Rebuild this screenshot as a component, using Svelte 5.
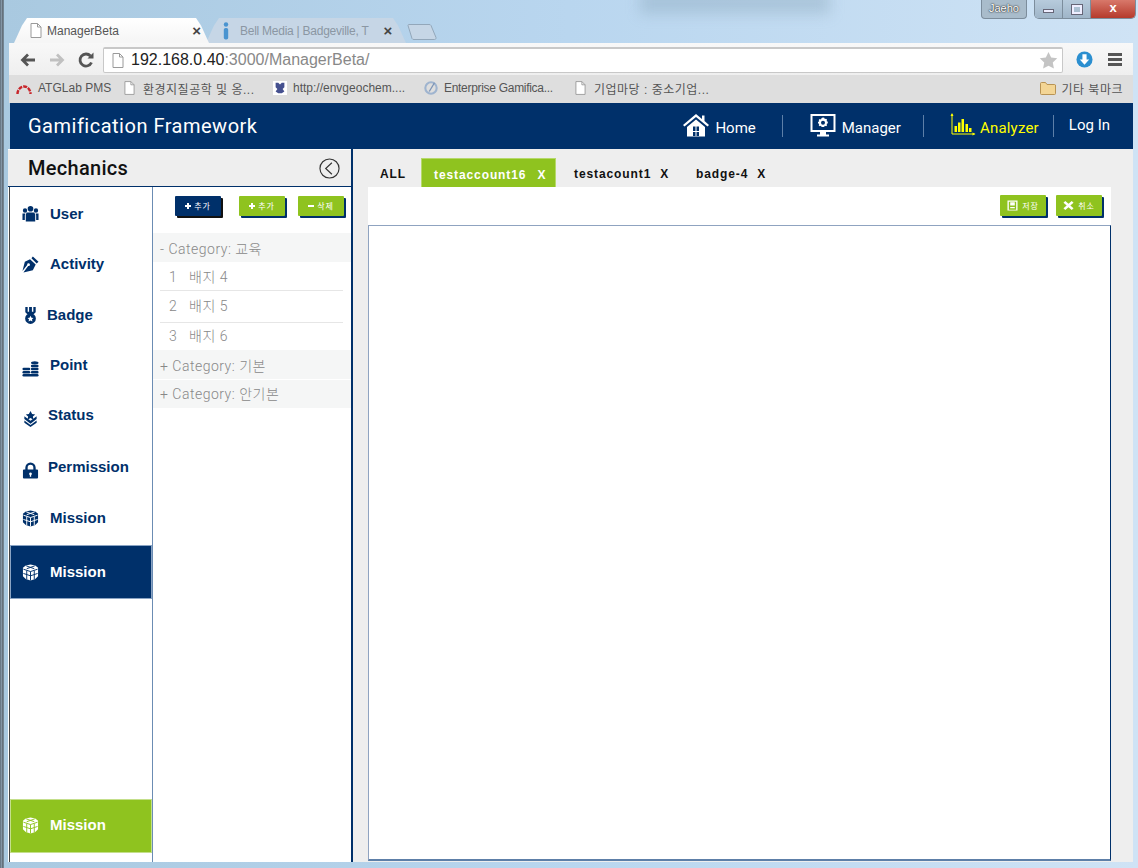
<script lang="ts">
  const NAV = [
    { id: 'user', label: 'User', left: 11, shift: 0, nudge: 0 },
    { id: 'activity', label: 'Activity', left: 11, shift: -1, nudge: 0 },
    { id: 'badge', label: 'Badge', left: 8, shift: -1, nudge: 0 },
    { id: 'point', label: 'Point', left: 11, shift: -2, nudge: 2 },
    { id: 'status', label: 'Status', left: 9, shift: -3, nudge: 1 },
    { id: 'permission', label: 'Permission', left: 9, shift: -2, nudge: 2 },
    { id: 'mission', label: 'Mission', left: 11, shift: -2, nudge: -1 },
  ];
  const BADGES = [
    { no: 1, name: '배지 4', cls: 'r1' },
    { no: 2, name: '배지 5', cls: 'r2' },
    { no: 3, name: '배지 6', cls: 'r3' },
  ];
</script>

{#snippet cube()}
  <svg class="ico" viewBox="0 0 18 18">
    <path fill="currentColor" d="M9 0.500 L14 1.500 L17 4 V13 L14 16 L9 17.500 L4 16 L1 13 V4 L4 1.500Z"/>
    <path fill="none" stroke="var(--cut)" stroke-width="1" d="M1.500 5.500 L9 8 L16.500 5.500 M9 8 V17.500 M1.500 10 L9 12.500 L16.500 10 M5 7 V16 M13 7 V16 M4.500 2 L13 5 M13.500 2 L5 5"/>
  </svg>
{/snippet}

{#snippet navIcon(id)}
  {#if id === 'user'}
    <svg class="ico" viewBox="0 0 18 18"><path fill="currentColor" d="M9 1a3 3 0 1 1 0 6a3 3 0 1 1 0-6ZM3.200 3.500a2.300 2.300 0 1 1 0 4.600a2.300 2.300 0 1 1 0-4.600ZM14.800 3.500a2.300 2.300 0 1 1 0 4.600a2.300 2.300 0 1 1 0-4.600ZM5 8h8l1 2v7.500H4V10ZM0.500 9h3L3 11v5H0.500ZM14.500 9h3v7H15v-5Z"/></svg>
  {:else if id === 'activity'}
    <svg class="ico" viewBox="0 0 18 18"><path fill="currentColor" d="M11.500 0.500 L17.500 6 L15.500 8 L10 2.500ZM8.500 3.500 L14.500 9 L11.500 15 L1.500 17.500 L6.500 10.500 A1.500 1.500 0 1 0 5.500 9.500 L0.500 16 L3 6Z"/></svg>
  {:else if id === 'badge'}
    <svg class="ico" viewBox="0 0 18 18"><path fill="currentColor" d="M3.500 0h2.500v5h1.500V0h3v5H12V0h2.500v5.500L12 8H6L3.500 5.500Z"/><path fill="currentColor" fill-rule="evenodd" d="M9 6.500a5.700 5.700 0 1 1 0 11.400a5.700 5.700 0 1 1 0-11.400ZM9 9.300l1 2 2.200 0.300-1.600 1.500 0.400 2.200L9 14.200l-2 1.100 0.400-2.200-1.600-1.500 2.200-0.300Z"/></svg>
  {:else if id === 'point'}
    <svg class="ico" viewBox="0 0 18 18"><g fill="currentColor"><ellipse cx="13.500" cy="3" rx="4" ry="1.800"/><rect x="9.500" y="5" width="8" height="2.600" rx="1"/><rect x="9.500" y="8.300" width="8" height="2.600" rx="1"/><rect x="9.500" y="11.600" width="8" height="2.600" rx="1"/><rect x="0.500" y="8.300" width="8.300" height="2.600" rx="1.300"/><rect x="0.500" y="11.600" width="8.300" height="2.600" rx="1.300"/><rect x="0.500" y="14.800" width="17" height="2.600" rx="1.300"/></g></svg>
  {:else if id === 'status'}
    <svg class="ico" viewBox="0 0 18 18"><path fill="currentColor" d="M9 1l1.700 3.300 3.300 0.400-2.500 2.300 0.700 3.300L9 8.600l-3.200 1.700 0.700-3.300L4 4.700l3.300-0.400ZM2.500 6.500 L9 11.500 L15.500 6.500 V9.500 L9 14.500 L2.500 9.500ZM2.500 11 L9 16 L15.500 11 V13.500 L9 18 L2.500 13.500Z"/></svg>
  {:else if id === 'permission'}
    <svg class="ico" viewBox="0 0 18 18"><path fill="currentColor" fill-rule="evenodd" d="M9 0.500a5.500 5.500 0 0 1 5.500 5.500v2H16a1 1 0 0 1 1 1v7.500a1 1 0 0 1-1 1H2a1 1 0 0 1-1-1V9a1 1 0 0 1 1-1h1.500V6A5.500 5.500 0 0 1 9 0.500ZM9 3a3 3 0 0 0-3 3v2h6V6a3 3 0 0 0-3-3ZM9 11a1.500 1.500 0 0 0-0.700 2.800V15.500h1.400V13.800A1.500 1.500 0 0 0 9 11Z"/></svg>
  {:else}
    {@render cube()}
  {/if}
{/snippet}

{#snippet docIcon()}
  <svg class="doc" viewBox="0 0 12 15"><path fill="#fff" stroke="#9a9a9a" d="M1 0.500h6.500L11 4v10.500H1Z"/><path fill="none" stroke="#9a9a9a" d="M7.500 0.500V4H11"/></svg>
{/snippet}

<div class="glass">
  <div class="smudge"></div>
  <div class="titlebar">
    <span class="profile">Jaeho</span>
    <div class="controls">
      <span class="ctl"><i class="min"></i></span>
      <span class="ctl"><i class="max"></i></span>
      <span class="ctl close">x</span>
    </div>
  </div>

  <div class="tabstrip">
    <div class="ctab active">
      {@render docIcon()}
      <span class="ctab-title">ManagerBeta</span>
      <span class="ctab-x">×</span>
    </div>
    <div class="ctab second">
      <svg class="info" viewBox="0 0 8 18"><circle cx="4" cy="2.500" r="2.200" fill="#4a94d0"/><rect x="1.800" y="6" width="4.400" height="11.500" rx="1.800" fill="#4a94d0"/></svg>
      <span class="ctab-title">Bell Media | Badgeville, T</span>
      <span class="ctab-x">×</span>
    </div>
    <svg class="newtab" viewBox="0 0 30 16"><path fill="#c6d6e6" stroke="#93a7ba" d="M1 1.500a1 1 0 0 1 1-1h20a2 2 0 0 1 2 1l5 12a1.500 1.500 0 0 1-1.500 2H7a2 2 0 0 1-2-1Z"/></svg>
  </div>

  <div class="sheet">
    <div class="toolbar">
      <svg class="tool" viewBox="0 0 18 18"><path fill="none" stroke="#555" stroke-width="2.800" d="M16 9H4M9 3.500L3.500 9L9 14.500"/></svg>
      <svg class="tool" viewBox="0 0 18 18"><path fill="none" stroke="#c0c0c0" stroke-width="2.800" d="M2 9H14M9 3.500L14.500 9L9 14.500"/></svg>
      <svg class="tool last-tool" viewBox="0 0 18 18"><path fill="none" stroke="#555" stroke-width="2.800" d="M14.500 11.500A6 6 0 1 1 13.500 5"/><path fill="#555" d="M10.500 7.500h6v-6Z"/></svg>
      <div class="omnibox">
        {@render docIcon()}
        <span class="url"><b>192.168.0.40</b>:3000/ManagerBeta/</span>
        <svg class="star" viewBox="0 0 20 20"><path fill="#c4c4c4" d="M10 1l2.800 5.900 6.400 0.800-4.700 4.400 1.200 6.400L10 15.400l-5.700 3.100 1.200-6.400L0.800 7.700l6.400-0.800Z"/></svg>
      </div>
      <svg class="dl" viewBox="0 0 18 18"><circle cx="9" cy="9" r="8.500" fill="#2b8fd0"/><path fill="#fff" d="M6.800 3.500h4.400V9H14l-5 5.500L4 9h2.800Z"/></svg>
      <div class="burger"><i></i><i></i><i></i></div>
    </div>

    <div class="bookmarks">
      <span class="bm first"><svg class="bm-ico" viewBox="0 0 16 14"><path fill="none" stroke="#c8262b" stroke-width="2.400" stroke-dasharray="4 1" d="M1.500 13A6.500 7.500 0 0 1 14.500 13"/></svg>ATGLab PMS</span>
      <span class="bm w148 ko">{@render docIcon()}환경지질공학 및 옹...</span>
      <span class="bm w151"><svg class="bm-ico" viewBox="0 0 16 16"><rect width="16" height="16" fill="#fff"/><path fill="#45508f" d="M3 2h3l2 2 2-2h3v5l-2 2 2 3-3 2H6l-3-2 2-3-2-2Z"/></svg>http://envgeochem....</span>
      <span class="bm w152 tight"><svg class="bm-ico" viewBox="0 0 16 16"><circle cx="8" cy="8" r="6.500" fill="none" stroke="#9fb4cf" stroke-width="2.400"/><path stroke="#7c93b5" stroke-width="1.500" d="M12 2L6 12"/></svg>Enterprise Gamifica...</span>
      <span class="bm ko">{@render docIcon()}기업마당 : 중소기업...</span>
      <span class="bm last ko"><svg class="bm-ico" viewBox="0 0 16 14"><path fill="#f3d595" stroke="#b89354" d="M0.500 2.500a1 1 0 0 1 1-1h4l1.500 2h7.500a1 1 0 0 1 1 0.500v8.500a1 1 0 0 1-1 1h-13a1 1 0 0 1-1-1Z"/></svg>기타 북마크</span>
    </div>

    <header class="appbar">
      <h1>Gamification Framework</h1>
      <nav class="topnav">
        <a class="home">
          <svg class="top-ico" viewBox="0 0 26 24"><path fill="#fff" d="M13 1 L19 6 V2.500 H21.500 V8 L26 12 L24.500 13.500 L13 4 L1.500 13.500 L0 12ZM4 14 L13 6.500 L22 14 V23.500 H4ZM10 13.500 V18 H12.500 V13.500ZM13.500 13.500 V18 H16 V13.500ZM10 19 V23 H12.500 V19ZM13.500 19 V23 H16 V19Z" fill-rule="evenodd"/></svg>
          Home
        </a>
        <span class="sep s1"></span>
        <a class="manager">
          <svg class="top-ico" viewBox="0 0 26 24"><path fill="#fff" fill-rule="evenodd" d="M0.500 1h25v18H16v2.500h3V23.500H7V21.500h3V19H0.500ZM2.500 3V17h21V3Z"/><path fill="#fff" d="M13 4.500l1.300 0.300 0.500 1.300 1.300-0.400 1 1-0.500 1.300 1.200 0.700v1.500l-1.200 0.700 0.500 1.300-1 1-1.300-0.500-0.700 1.200H11.600l-0.600-1.200-1.300 0.500-1-1 0.500-1.300-1.200-0.700V9l1.200-0.700-0.500-1.300 1-1 1.300 0.400 0.600-1.300ZM13 7.800a2 2 0 1 0 0 4a2 2 0 1 0 0-4Z" fill-rule="evenodd"/></svg>
          Manager
        </a>
        <span class="sep s2"></span>
        <a class="analyzer">
          <svg class="top-ico" viewBox="0 0 25 24"><path fill="none" stroke="#ff0" stroke-width="1" d="M1.500 1V21H24"/><path fill="#ff0" d="M1.500 0L0 3h3ZM25 21l-3-1.500v3ZM4 13h2.500v6H4ZM7.500 9.500H10V19H7.500ZM11 6h2.500v13H11ZM15 11h2.500v8H15ZM18.500 15H21v4h-2.500Z"/></svg>
          Analyzer
        </a>
        <span class="sep s3"></span>
        <a class="login">Log In</a>
      </nav>
    </header>

    <div class="body">
      <aside class="side">
        <div class="side-head">
          <h2>Mechanics</h2>
          <svg class="collapse" viewBox="0 0 22 22"><circle cx="11" cy="11" r="10" fill="none" stroke="#333" stroke-width="1.200"/><path fill="none" stroke="#333" stroke-width="1.200" d="M13.500 5L7 11l6.500 6"/></svg>
        </div>
        <div class="side-cols">
          <ul class="mech">
            {#each NAV as item}
              <li class="mech-item" style="--t:{item.left}px;--dy:{item.shift}px;--iy:{item.nudge}px">
                {@render navIcon(item.id)}
                <span>{item.label}</span>
              </li>
            {/each}
            <li class="mech-item selected" style="--t:11px;--dy:-1px;--iy:0px">{@render cube()}<span>Mission</span></li>
            <li class="mech-item green" style="--t:11px;--dy:-2px;--iy:-1px">{@render cube()}<span>Mission</span></li>
          </ul>

          <div class="list">
            <div class="list-btns">
              <button class="btn navy"><i class="plus"></i>추가</button>
              <button class="btn lime gap1"><i class="plus"></i>추가</button>
              <button class="btn lime gap2"><i class="minus"></i>삭제</button>
            </div>
            <div class="cat">- Category: 교육</div>
            {#each BADGES as b}
              <div class="badge-row {b.cls}"><span class="no">{b.no}</span>{b.name}</div>
            {/each}
            <div class="cat">+ Category: 기본</div>
            <div class="cat next">+ Category: 안기본</div>
          </div>
        </div>
      </aside>

      <main class="content">
        <div class="tabs">
          <span class="tab all">ALL</span>
          <span class="tab on">testaccount16<em>X</em></span>
          <span class="tab t2">testacount1<em>X</em></span>
          <span class="tab t3">badge-4<em>X</em></span>
        </div>
        <div class="panel">
          <div class="panel-bar">
            <button class="btn lime act">
              <svg viewBox="0 0 12 12"><path fill="#fff" fill-rule="evenodd" d="M0.500 0.500h11v11h-11ZM2 2v8.500h8V2ZM3.500 2.500h5V6h-5ZM3.500 7.500h5V9h-5Z"/></svg>저장
            </button>
            <button class="btn lime act">
              <svg viewBox="0 0 12 12"><path fill="#fff" d="M2.500 1L6 4.200 9.500 1 11.500 3 8 6l3.500 3-2 2L6 7.800 2.500 11 0.500 9 4 6 0.500 3Z"/></svg>취소
            </button>
          </div>
          <div class="canvas"></div>
        </div>
      </main>
    </div>
  </div>
</div>

<style>
  :global(body) { margin: 0; background: #a8cbe8; }
  * { box-sizing: border-box; }
  .glass {
    width: 1138px; height: 868px; overflow: hidden; position: relative;
    padding: 0 5px 6px 9px;
    background: linear-gradient(90deg, #5d6b78 0, #8fa3b3 2px, #3b3f44 3px, #a9c9e0 4px, #b9d6ef 50%, #cfe3f5 100%);
    font-family: "Liberation Sans", "Noto Sans CJK KR", sans-serif;
  }
  .smudge {
    position: absolute; left: 640px; top: -10px; width: 190px; height: 24px;
    background: rgba(120, 150, 170, .3); filter: blur(7px);
  }
  .titlebar { height: 18px; display: flex; justify-content: flex-end; align-items: flex-start; margin-right: -3px; position: relative; }
  .profile {
    width: 46px; height: 19px; margin-right: 7px; border: 1px solid #7c8d9c; border-top: 0;
    border-radius: 0 0 4px 4px; background: #a9bccb; color: #fff;
    font-size: 11px; line-height: 17px; text-align: center; text-shadow: 0 0 2px #222, 0 0 1px #222;
  }
  .controls { display: flex; height: 19px; border: 1px solid #7c8d9c; border-top: 0; border-radius: 0 0 5px 5px; overflow: hidden; }
  .ctl { width: 28px; display: flex; align-items: center; justify-content: center; background: linear-gradient(#b7cbdc, #9fb5c8); border-right: 1px solid #7c8d9c; }
  .ctl.close { width: 44px; border: 0; background: linear-gradient(#d8786a, #b53a2c); color: #fff; font: bold 13px/1 "Liberation Sans", sans-serif; padding-bottom: 4px; }
  .min { width: 11px; height: 4px; background: #eef; border: 1px solid #667; margin-top: 4px; }
  .max { width: 10px; height: 9px; border: 2px solid #eef; outline: 1px solid #667; }

  .tabstrip { height: 25px; display: flex; align-items: flex-end; padding-left: 5px; position: relative; }
  .ctab {
    width: 195px; height: 25px; margin-right: -3px; padding: 0 8px 0 16px;
    display: flex; align-items: center; gap: 5px;
    clip-path: polygon(0 100%, 8px 30%, 13px 0, calc(100% - 13px) 0, calc(100% - 8px) 30%, 100% 100%);
    background: #c6d6e6; color: #8b97a3; font-size: 12px;
  }
  .ctab.active { background: linear-gradient(#fff, #f6f6f6 90%); color: #555; z-index: 1; }
  .ctab.second { width: 200px; padding: 0 14px 0 16px; gap: 10px; letter-spacing: -0.25px; }
  .ctab-title { flex: 1; white-space: nowrap; }
  .ctab-x { font: bold 15px/1 "Liberation Sans", sans-serif; color: #444; }
  .doc { width: 12px; height: 15px; flex: none; }
  .info { width: 8px; height: 18px; }
  .newtab { width: 30px; height: 16px; margin: 0 0 3px 4px; flex: none; }

  .sheet { height: 819px; display: flex; flex-direction: column; position: relative; }
  .toolbar {
    height: 32px; display: flex; align-items: center; padding: 1px 0 0 10px; flex: none;
    background: linear-gradient(#f8f8f8, #efefef);
  }
  .tool { width: 18px; height: 18px; flex: none; margin-right: 11px; }
  .last-tool { margin-right: 8px; }
  .omnibox {
    width: 960px; height: 26px; padding: 0 2px 0 8px; display: flex; align-items: center; gap: 7px;
    background: #fff; border: 1px solid #c8c8c8; border-top-width: 2px; border-radius: 2px; flex: none;
  }
  .url { flex: 1; font-size: 16px; color: #888; }
  .url b { font-weight: 400; color: #222; }
  .star { width: 19px; height: 19px; margin-right: 2px; }
  .dl { width: 17px; height: 17px; margin-left: 13px; flex: none; }
  .burger { margin-left: 15px; display: flex; flex-direction: column; gap: 2px; }
  .burger i { width: 14px; height: 3px; background: #555; display: block; }

  .bookmarks {
    height: 28px; flex: none; display: flex; align-items: center; padding: 0 10px 2px 7px;
    background: #dedede; font-size: 12px; color: #555; white-space: nowrap;
  }
  .bm { display: flex; align-items: center; gap: 5px; }
  .bm .doc { width: 11px; height: 14px; margin-right: 3px; }
  .bm-ico { width: 16px; height: 14px; flex: none; }
  .first { width: 108px; gap: 6px; }
  .w148 { width: 148px; }
  .w151 { width: 151px; }
  .w152 { width: 152px; }
  .ko { letter-spacing: 0.5px; }
  .tight { letter-spacing: -0.3px; }
  .last { margin-left: auto; }

  .appbar {
    height: 46px; flex: none; display: flex; align-items: center; justify-content: space-between;
    background: #00306a; color: #fff; padding: 0 0 0 18px; margin-left: 1px;
  }
  h1 { margin: 0; font: 400 20px/1 "Roboto", sans-serif; letter-spacing: 0.5px; }
  .topnav { display: flex; align-items: center; font: 400 15px/1 "Roboto", sans-serif; height: 100%; }
  .topnav a { display: flex; align-items: center; gap: 6px; padding-top: 4px; }
  .top-ico { width: 26px; height: 24px; margin-top: -7px; }
  .sep { width: 1px; height: 22px; background: #5d7fa8; }
  .s1 { margin: 0 27px 0 26px; }
  .s2 { margin: 0 26px 0 22px; }
  .s3 { margin: 0 15px 0 14px; }
  .topnav .analyzer { color: #ff0; gap: 4px; letter-spacing: 0.2px; }
  .topnav .login { margin-right: 23px; padding-top: 0; margin-top: -1px; }

  .body { flex: 1; min-height: 0; display: flex; margin-left: -1px; }
  .side { width: 345px; flex: none; display: flex; flex-direction: column; background: #fff; border-right: 2px solid #00306a; padding-top: 1px; }
  .side-head {
    height: 37px; flex: none; display: flex; align-items: center; justify-content: space-between;
    padding: 0 11px 0 20px; background: #eee; border-bottom: 1px solid #00306a;
  }
  h2 { margin: 0; font: 500 20px/1 "Roboto", sans-serif; color: #111; letter-spacing: 0.3px; }
  .collapse { width: 21px; height: 21px; }
  .side-cols { flex: 1; display: flex; min-height: 0; }
  .mech {
    width: 144px; margin: 0 0 0 1px; padding: 1px 0 0; list-style: none; flex: none; display: flex; flex-direction: column;
    border-left: 1px solid #444; border-right: 1px solid #6b8cb3; --cut: #fff;
  }
  .mech-item {
    height: 51px; flex: none; display: flex; align-items: center; padding-left: 12px;
    font: bold 15px/1 "Liberation Sans", sans-serif; color: #00306a;
  }
  .mech-item span { margin-left: var(--t); transform: translateY(var(--dy)); }
  .mech-item .ico { transform: translateY(var(--iy)); }
  .ico { width: 17px; height: 17px; flex: none; }
  .selected { height: 54px; background: #00306a; color: #fff; --cut: #00306a; outline: 1px solid #8aa4c4; outline-offset: -1px; }
  .green { height: 54px; margin-top: auto; margin-bottom: 9px; background: #8fc31f; color: #fff; --cut: #8fc31f; outline: 1px solid #c4df8b; outline-offset: -1px; }

  .list { flex: 1; min-width: 0; }
  .list-btns { display: flex; padding: 9px 0 0 22px; height: 46px; }
  .btn {
    height: 20px; width: 46px; padding: 0; border: 0; border-radius: 1px; display: flex; align-items: center; justify-content: center; gap: 3px;
    font: 400 8px/1 "Noto Sans CJK KR", sans-serif; letter-spacing: 1px; color: #fff; box-shadow: 2px 2px 0 #00306a;
  }
  .navy { background: #00306a; box-shadow: 2px 2px 0 #111; }
  .lime { background: #8fc31f; }
  .gap1 { margin-left: 18px; }
  .gap2 { margin-left: 13px; }
  .plus, .minus { width: 6px; height: 2px; background: #fff; position: relative; display: block; }
  .plus::after { content: ''; position: absolute; left: 2px; top: -2px; width: 2px; height: 6px; background: #fff; }
  .cat {
    height: 29px; display: flex; align-items: center; padding: 2px 0 0 7px; background: #f5f6f6;
    font: 300 14px/1 "Roboto", "Noto Sans CJK KR", sans-serif; color: #888; letter-spacing: 0.5px;
  }
  .cat.next { margin-top: 1px; height: 28px; padding-top: 0; }
  .badge-row {
    margin: 0 8px 0 7px; display: flex; align-items: center; padding-left: 9px;
    font: 300 14px/1 "Roboto", "Noto Sans CJK KR", sans-serif; color: #888; letter-spacing: 0.5px;
    border-bottom: 1px solid #e6e6e6;
  }
  .r1 { height: 29px; padding-top: 1px; }
  .r2 { height: 32px; padding-bottom: 2px; }
  .r3 { height: 27px; border: 0; padding-bottom: 2px; }
  .no { width: 20px; }

  .content { flex: 1; min-width: 0; display: flex; flex-direction: column; background: #eee; padding: 9px 22px 1px 15px; }
  .tabs {
    height: 29px; flex: none; display: flex; align-items: stretch;
    font: bold 12px/1 "Liberation Sans", sans-serif; letter-spacing: 0.9px; color: #111;
  }
  .tab { display: flex; align-items: center; padding-top: 3px; white-space: nowrap; }
  .tab em { font-style: normal; margin-left: 9px; }
  .all { padding-left: 12px; width: 53px; }
  .on { width: 135px; padding-left: 12px; background: #8fc31f; color: #fff; border: 1px solid #b6d96a; border-bottom: 0; }
  .on em { margin-left: 11px; }
  .t2 { margin-left: 18px; width: 122px; }
  .panel { flex: 1; min-height: 0; display: flex; flex-direction: column; background: #fff; }
  .panel-bar { height: 38px; flex: none; display: flex; justify-content: flex-end; gap: 10px; padding: 8px 9px 0 0; }
  .act { height: 21px; font-size: 8px; gap: 4px; }
  .act svg { width: 11px; height: 11px; }
  .canvas { flex: 1; border: 1px solid #8fa3c0; border-right-color: #00306a; border-bottom: 2px solid #5d7fa8; }
</style>
